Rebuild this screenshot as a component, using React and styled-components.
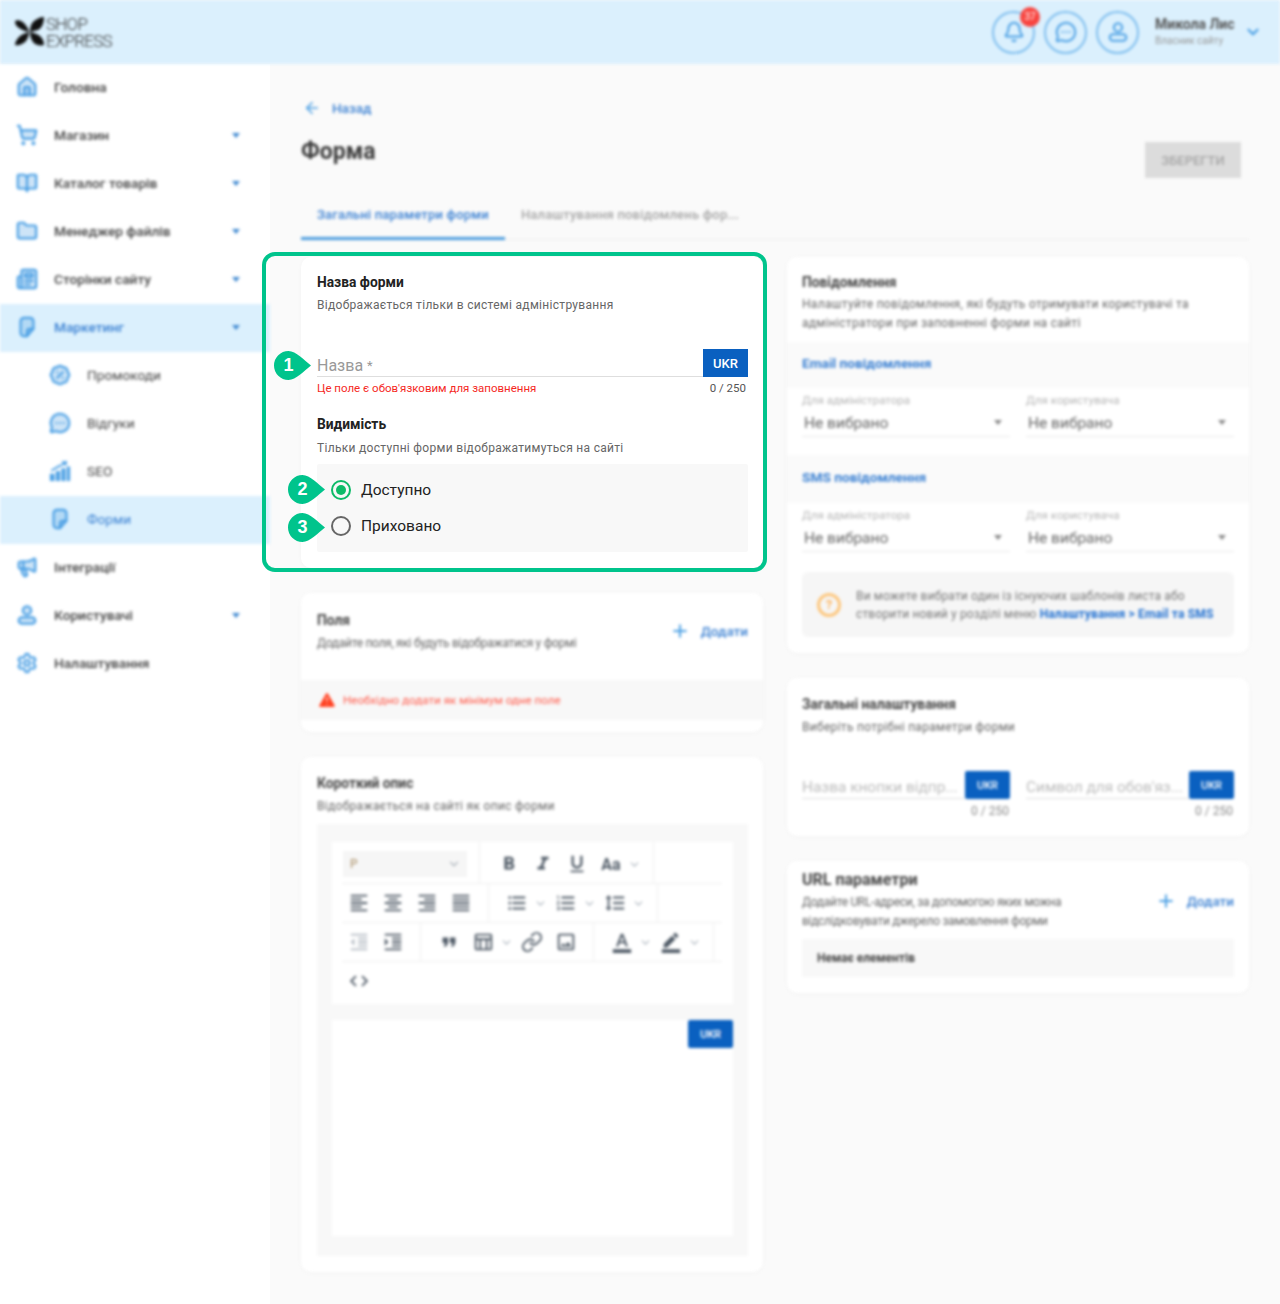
import React from "react";
import styled, { createGlobalStyle } from "styled-components";
import {
  Home,
  ShoppingCart,
  BookOpen,
  Folder,
  Newspaper,
  BadgePercent,
  MessageCircleMore,
  Megaphone,
  Settings,
  Bell,
  ChevronDown,
  ArrowLeft,
  Plus,
  TriangleAlert,
  Link as LinkIcon,
} from "lucide-react";
import {
  MdFormatBold,
  MdFormatItalic,
  MdFormatUnderlined,
  MdFormatAlignLeft,
  MdFormatAlignCenter,
  MdFormatAlignRight,
  MdFormatAlignJustify,
  MdFormatListBulleted,
  MdFormatListNumbered,
  MdFormatLineSpacing,
  MdFormatIndentDecrease,
  MdFormatIndentIncrease,
  MdFormatQuote,
  MdOutlineTableChart,
  MdOutlineImage,
  MdFormatColorText,
  MdBorderColor,
  MdCode,
} from "react-icons/md";

const GlobalStyle = createGlobalStyle`
  * { box-sizing: border-box; }
  html, body { margin: 0; padding: 0; }
  body {
    font-family: Roboto, "Liberation Sans", sans-serif;
    background: #fafafa;
    color: #333;
  }
`;

const blur = "filter: blur(1.6px);";
const ICON_BLUE = "#4a9fe4";
const LINK_BLUE = "#3a80d2";

const Page = styled.div`
  width: 1280px;
  height: 1304px;
  overflow: hidden;
  background: #fafafa;
`;

const Header = styled.header`
  height: 64px;
  background: #dbf0fd;
  display: flex;
  align-items: center;
  padding: 0 18px 0 14px;
  ${blur}
`;

const Logo = styled.div`
  display: flex;
  align-items: center;
  gap: 1px;
`;

const LogoText = styled.div`
  padding-top: 1px;
  font-size: 17px;
  font-weight: 300;
  line-height: 17px;
  letter-spacing: -0.75px;
  color: #333;
`;

const HeaderRight = styled.div`
  margin-left: auto;
  display: flex;
  align-items: center;
`;

const RoundButton = styled.div`
  position: relative;
  width: 43px;
  height: 43px;
  border-radius: 50%;
  border: 2px solid #7dbdee;
  margin-right: 9px;
  display: flex;
  align-items: center;
  justify-content: center;
  color: ${ICON_BLUE};
`;

const Badge = styled.span`
  position: absolute;
  top: -6px;
  right: -7px;
  width: 20px;
  height: 20px;
  border-radius: 50%;
  background: #f8443f;
  color: #fff;
  font-size: 10px;
  display: flex;
  align-items: center;
  justify-content: center;
`;

const UserBox = styled.div`
  margin-left: 7px;
  width: 89px;
`;

const UserName = styled.div`
  font-size: 14px;
  font-weight: 700;
  color: #555;
  line-height: 16px;
`;

const UserRole = styled.div`
  font-size: 10px;
  color: #999;
  line-height: 14px;
  margin-top: 2px;
`;

const Body = styled.div`
  display: grid;
  grid-template-columns: 270px 1010px;
  height: 1240px;
`;

const Sidebar = styled.nav`
  background: #fff;
`;

const SideList = styled.div`
  ${blur}
`;

const SideRow = styled.div`
  height: 48px;
  display: flex;
  align-items: center;
  padding-left: ${(p) => (p.$sub ? "49px" : "16px")};
  padding-right: 30px;
  padding-bottom: 2px;
  background: ${(p) => (p.$active ? "#dbf0fd" : "transparent")};
  color: ${(p) => (p.$active ? LINK_BLUE : "#444")};
  font-size: 13.7px;
  font-weight: ${(p) => (p.$sub ? 400 : 500)};
  svg {
    color: ${ICON_BLUE};
    fill: ${(p) => (p.$noFill ? "none" : "rgba(74, 159, 228, 0.28)")};
    flex: none;
  }
`;

const SideLabel = styled.span`
  margin-left: 16px;
  flex: 1;
`;

const Caret = styled.span`
  width: 0;
  height: 0;
  border-left: 4.5px solid transparent;
  border-right: 4.5px solid transparent;
  border-top: 5px solid ${(p) => p.$color || "#3f88d0"};
`;

const Main = styled.main`
  padding: 36px 31px 0;
`;

const PageHead = styled.div`
  ${blur}
`;

const BackLink = styled.div`
  height: 16px;
  display: flex;
  align-items: center;
  gap: 11px;
  margin-left: 2px;
  font-size: 13.5px;
  font-weight: 500;
  color: ${LINK_BLUE};
  svg {
    color: ${ICON_BLUE};
  }
`;

const TitleRow = styled.div`
  margin-top: 18px;
  height: 44px;
  display: flex;
  justify-content: space-between;
`;

const Title = styled.h1`
  margin: 0;
  font-size: 23px;
  font-weight: 700;
  line-height: 36px;
  color: #3c3c3c;
`;

const SaveButton = styled.div`
  margin: 8px 8px 0 0;
  width: 96px;
  height: 36px;
  background: #dcdcdc;
  color: #a5a5a5;
  font-size: 13px;
  font-weight: 500;
  display: flex;
  align-items: center;
  justify-content: center;
`;

const Tabs = styled.div`
  margin-top: 15px;
  height: 47px;
  display: flex;
  border-bottom: 1px solid #eee;
`;

const Tab = styled.div`
  height: 47px;
  padding: 14px 16px 0;
  font-size: 13px;
  font-weight: 500;
  letter-spacing: 0.2px;
  color: ${(p) => (p.$active ? LINK_BLUE : "#a5a5a5")};
  border-bottom: 3px solid ${(p) => (p.$active ? "#4a9bdd" : "transparent")};
`;

const Columns = styled.div`
  margin-top: 17px;
  display: grid;
  grid-template-columns: 462px 462px;
  column-gap: 24px;
  align-items: start;
`;

const Column = styled.div`
  display: flex;
  flex-direction: column;
  gap: 25px;
`;

const BlurColumn = styled(Column)`
  ${blur}
`;

const Card = styled.section`
  position: relative;
  background: #fff;
  border-radius: 10px;
  box-shadow: 0 1px 4px rgba(0, 0, 0, 0.03);
  height: ${(p) => p.$h}px;
  ${(p) => (p.$blur ? blur : "")}
`;

const CardBody = styled.div`
  padding: ${(p) => p.$top ?? 15}px 15px 0 ${(p) => p.$left ?? 15}px;
`;

const CardTitle = styled.div`
  margin-top: ${(p) => p.$mt ?? 0}px;
  font-size: ${(p) => p.$size || 13.8}px;
  font-weight: 700;
  line-height: 20px;
  color: ${(p) => (p.$dim ? "#444" : "#222")};
`;

const CardDesc = styled.div`
  margin-top: ${(p) => p.$mt ?? 3}px;
  font-size: 12px;
  letter-spacing: ${(p) => p.$ls ?? 0.3}px;
  line-height: ${(p) => p.$lh ?? 20}px;
  color: #666;
  white-space: nowrap;
`;

const FocusFrame = styled.div`
  position: absolute;
  left: -39px;
  right: -4px;
  top: -5px;
  bottom: -4px;
  border: 4px solid #00c48c;
  border-radius: 13px;
  pointer-events: none;
`;

const Callout = styled.div`
  position: absolute;
  left: ${(p) => p.$x}px;
  top: ${(p) => p.$y}px;
  width: 37px;
  height: 29px;
  svg {
    display: block;
  }
`;

const CalloutNum = styled.span`
  position: absolute;
  left: 0;
  top: 0;
  width: 29px;
  height: 29px;
  display: flex;
  align-items: center;
  justify-content: center;
  color: #fff;
  font-family: "Liberation Sans", Arial, sans-serif;
  font-size: 18px;
  font-weight: 700;
`;

const InputRow = styled.div`
  margin-top: ${(p) => p.$mt}px;
  display: flex;
  align-items: flex-end;
`;

const InputBox = styled.div`
  flex: 1;
  min-width: 0;
  height: 28px;
  display: flex;
  align-items: flex-end;
  padding-bottom: ${(p) => (p.$dim ? 1 : 0)}px;
  border-bottom: 1px solid #dedede;
  font-size: ${(p) => (p.$dim ? 15.4 : 16)}px;
  line-height: 20px;
  color: ${(p) => (p.$dim ? "#bbb" : "#999")};
  white-space: nowrap;
`;

const Star = styled.span`
  font-size: 13px;
  line-height: 1;
  margin-left: 4px;
  align-self: flex-start;
  margin-top: 10px;
`;

const UkrButton = styled.div`
  width: ${(p) => p.$w || 45}px;
  height: 28px;
  flex: none;
  background: #0a60c0;
  color: #fff;
  font-size: ${(p) => p.$fs || 13}px;
  font-weight: 500;
  border-radius: ${(p) => (p.$round ? 2 : 0)}px;
  display: flex;
  align-items: center;
  justify-content: center;
`;

const HelperRow = styled.div`
  margin-top: 4px;
  display: flex;
  justify-content: space-between;
  font-size: 11.5px;
  line-height: 14px;
`;

const ErrorText = styled.span`
  color: #f5291f;
`;

const Counter = styled.span`
  color: #555;
  margin-right: 2px;
`;

const RadioPanel = styled.div`
  margin-top: 6px;
  background: #f8f8f8;
  border-radius: 2px;
  padding: 8px 14px;
`;

const RadioRow = styled.label`
  height: 36px;
  display: flex;
  align-items: center;
  gap: 10px;
  font-size: 15.5px;
  color: #222;
`;

const RadioDot = styled.span`
  width: 20px;
  height: 20px;
  border-radius: 50%;
  border: 2px solid ${(p) => (p.$on ? "#0dbb68" : "#666")};
  display: flex;
  align-items: center;
  justify-content: center;
  &::after {
    content: "";
    width: 10px;
    height: 10px;
    border-radius: 50%;
    background: ${(p) => (p.$on ? "#0dbb68" : "transparent")};
  }
`;

const HeadFlex = styled.div`
  display: flex;
  justify-content: space-between;
  align-items: flex-start;
`;

const AddLink = styled.div`
  display: flex;
  align-items: center;
  gap: 11px;
  margin-top: ${(p) => p.$mt}px;
  font-size: 13.5px;
  font-weight: 500;
  color: ${LINK_BLUE};
  svg {
    color: ${ICON_BLUE};
  }
`;

const WarnStrip = styled.div`
  position: absolute;
  left: 0;
  right: 0;
  top: 87px;
  height: 40px;
  background: #f8f8f8;
  display: flex;
  align-items: center;
  gap: 6px;
  padding-left: 16px;
  font-size: 11.6px;
  color: #ff5a4a;
  svg {
    color: #ff4020;
    fill: #ff4020;
  }
`;

const EditorArea = styled.div`
  margin-top: 8px;
  background: #f8f8f8;
  height: 432px;
  padding: 18px 15px;
`;

const Toolbar = styled.div`
  background: #fff;
  height: 162px;
  padding: 0 11px 0 10px;
`;

const ToolRow = styled.div`
  height: ${(p) => p.$h}px;
  display: flex;
  border-bottom: ${(p) => (p.$last ? "none" : "1px solid #eee")};
`;

const ToolGroup = styled.div`
  display: flex;
  align-items: center;
  padding: ${(p) => p.$pt ?? 0}px ${(p) => p.$pr ?? 10}px ${(p) => p.$pb ?? 0}px ${(p) => p.$pl ?? 11}px;
  border-right: ${(p) => (p.$last ? "none" : "1px solid #eee")};
`;

const ToolButton = styled.div`
  width: ${(p) => (p.$chev ? 49 : 34)}px;
  height: 26px;
  display: flex;
  align-items: center;
  padding-left: 6px;
  gap: 6px;
  color: ${(p) => (p.$light ? "#b5bcc4" : "#4f5a66")};
`;

const AaGlyph = styled.span`
  width: 22px;
  text-align: center;
  font-size: 16px;
  font-weight: 700;
`;

const ToolChevron = styled(ChevronDown)`
  color: #aab2ba;
  flex: none;
`;

const FormatSelect = styled.div`
  width: 124px;
  height: 26px;
  background: #f6f6f6;
  margin-left: 1px;
  padding: 0 6px 0 7px;
  display: flex;
  align-items: center;
  justify-content: space-between;
  font-size: 12px;
  color: #a78b60;
`;

const EditorBox = styled.div`
  margin-top: 16px;
  height: 216px;
  background: #fff;
  display: flex;
  justify-content: flex-end;
  align-items: flex-start;
`;

const GreyStrip = styled.div`
  background: #fafafa;
  height: ${(p) => p.$h}px;
  padding: ${(p) => p.$pt}px 15px 0;
`;

const StripTitle = styled.div`
  font-size: 13.7px;
  font-weight: 700;
  line-height: 24px;
  color: ${LINK_BLUE};
`;

const FieldRow = styled.div`
  display: grid;
  grid-template-columns: 208px 208px;
  column-gap: 16px;
  padding: ${(p) => (p.$flat ? "0 15px" : "4px 15px 0")};
`;

const FieldLabel = styled.div`
  font-size: 11.6px;
  line-height: 16px;
  color: #b5b5b5;
`;

const SelectBox = styled.div`
  height: 29px;
  display: flex;
  align-items: center;
  justify-content: space-between;
  padding: 1px 8px 0 2px;
  border-bottom: 1px solid #e8e8e8;
  font-size: 15.5px;
  color: #666;
`;

const Spacer = styled.div`
  height: ${(p) => p.$h}px;
`;

const InfoBox = styled.div`
  margin: 20px 15px 0;
  height: 65px;
  background: #f6f6f6;
  border-radius: 6px;
  display: flex;
  align-items: center;
  gap: 15px;
  padding-left: 15px;
  font-size: 12px;
  letter-spacing: 0.16px;
  line-height: 18px;
  color: #777;
`;

const InfoIcon = styled.span`
  width: 24px;
  height: 24px;
  flex: none;
  border-radius: 50%;
  border: 3px solid #fdc67c;
  color: #fdb45c;
  font-size: 13px;
  font-weight: 700;
  display: flex;
  align-items: center;
  justify-content: center;
`;

const InfoLink = styled.span`
  color: #1f6fd0;
  font-weight: 700;
`;

const CounterLine = styled.div`
  margin-top: 4px;
  text-align: right;
  padding-right: 1px;
  font-size: 12px;
  line-height: 16px;
  color: #888;
`;

const EmptyStrip = styled.div`
  margin: 8px 15px 0;
  height: 38px;
  background: #f8f8f8;
  display: flex;
  align-items: center;
  padding-left: 15px;
  font-size: 12px;
  font-weight: 700;
  color: #444;
`;

// narrow note with a curled corner, used for Маркетинг and Форми
function NoteIcon({ size = 22, strokeWidth = 2.4 }) {
  return (
    <svg width={size} height={size} viewBox="0 0 24 24" stroke="currentColor" strokeWidth={strokeWidth} strokeLinejoin="round" strokeLinecap="round">
      <path d="M9 2h6c2.5 0 4 1.5 4 4v8l-7 8H9c-2.5 0-4-1.5-4-4V6c0-2.5 1.500-4 4-4z" />
      <path d="M12 22v-5c0-2 1-3 3-3h4" />
    </svg>
  );
}

function UserIcon({ size = 22, strokeWidth = 2.4 }) {
  return (
    <svg width={size} height={size} viewBox="0 0 24 24" fill="none" stroke="currentColor" strokeWidth={strokeWidth}>
      <circle cx="12" cy="7" r="4.5" />
      <rect x="3" y="14.500" width="18" height="7" rx="3.500" />
    </svg>
  );
}

function SeoIcon({ size = 22 }) {
  return (
    <svg width={size} height={size} viewBox="0 0 24 24" style={{ fill: "currentColor" }} stroke="none">
      <path d="M1 23v-8h5v8zM7.500 23V12h4.500v11zM13.500 23V9H18v14zM19.500 23V7H23v16z" />
      <path d="M2 11l8-5 5-2-1.500-2.500L20 1l-1.500 6-1.500-2-6 3-8 4.500z" />
    </svg>
  );
}

const menu = [
  { label: "Головна", Icon: Home },
  { label: "Магазин", Icon: ShoppingCart, caret: true },
  { label: "Каталог товарів", Icon: BookOpen, caret: true },
  { label: "Менеджер файлів", Icon: Folder, caret: true },
  { label: "Сторінки сайту", Icon: Newspaper, caret: true },
  { label: "Маркетинг", Icon: NoteIcon, caret: true, active: true },
  { label: "Промокоди", Icon: BadgePercent, sub: true },
  { label: "Відгуки", Icon: MessageCircleMore, sub: true },
  { label: "SEO", Icon: SeoIcon, sub: true },
  { label: "Форми", Icon: NoteIcon, sub: true, active: true },
  { label: "Інтеграції", Icon: Megaphone },
  { label: "Користувачі", Icon: UserIcon, caret: true },
  { label: "Налаштування", Icon: Settings, noFill: true },
];

function LogoMark() {
  return (
    <svg width="31" height="32" viewBox="0 0 31 32">
      <path
        d="M1 5c4-2 9 1 12 6 1 2 2 3 2 5-4-1-7-2-10-4C2 10 1 8 1 5zM30 1c0 6-2 11-6 13-3 1-5 1-8 2 0-5 1-8 3-10 3-3 7-5 11-5zM15 16c-3 1-7 2-10 5-2 2-4 5-4 8 4 1 8-1 11-4 2-3 3-6 3-9zM16 16c4 1 8 2 11 5 2 2 3 5 3 8-4 1-9 0-11-3-2-3-3-6-3-10z"
        fill="#111"
      />
    </svg>
  );
}

function CalloutMark({ x, y, n }) {
  return (
    <Callout $x={x} $y={y}>
      <svg width="37" height="29" viewBox="0 0 37 29">
        <path
          d="M14.5 0C22 0 30 9 37 14.5 30 20 22 29 14.5 29A14.5 14.5 0 0 1 14.5 0Z"
          fill="#00c48c"
        />
      </svg>
      <CalloutNum>{n}</CalloutNum>
    </Callout>
  );
}

function Tool({ Icon, chev, light, text }) {
  return (
    <ToolButton $chev={chev} $light={light}>
      {text ? <AaGlyph>{text}</AaGlyph> : <Icon size={22} />}
      {chev && <ToolChevron size={13} strokeWidth={2} />}
    </ToolButton>
  );
}

function SelectField({ label }) {
  return (
    <div>
      <FieldLabel>{label}</FieldLabel>
      <SelectBox>
        Не вибрано
        <Caret $color="#888" />
      </SelectBox>
    </div>
  );
}

export default function App() {
  return (
    <Page>
      <GlobalStyle />
      <Header>
        <Logo>
          <LogoMark />
          <LogoText>
            SHOP
            <br />
            EXPRESS
          </LogoText>
        </Logo>
        <HeaderRight>
          <RoundButton>
            <Bell size={22} strokeWidth={2.2} />
            <Badge>37</Badge>
          </RoundButton>
          <RoundButton>
            <MessageCircleMore size={22} strokeWidth={2.2} />
          </RoundButton>
          <RoundButton>
            <UserIcon strokeWidth={2.2} />
          </RoundButton>
          <UserBox>
            <UserName>Микола Лис</UserName>
            <UserRole>Власник сайту</UserRole>
          </UserBox>
          <ChevronDown size={18} strokeWidth={3} color={ICON_BLUE} />
        </HeaderRight>
      </Header>

      <Body>
        <Sidebar>
          <SideList>
            {menu.map(({ label, Icon, caret, active, sub, noFill }) => (
              <SideRow key={label} $active={active} $sub={sub} $noFill={noFill}>
                <Icon size={22} strokeWidth={2.4} />
                <SideLabel>{label}</SideLabel>
                {caret && <Caret />}
              </SideRow>
            ))}
          </SideList>
        </Sidebar>

        <Main>
          <PageHead>
            <BackLink>
              <ArrowLeft size={18} strokeWidth={2.2} />
              Назад
            </BackLink>
            <TitleRow>
              <Title>Форма</Title>
              <SaveButton>ЗБЕРЕГТИ</SaveButton>
            </TitleRow>
            <Tabs>
              <Tab $active>Загальні параметри форми</Tab>
              <Tab>Налаштування повідомлень фор...</Tab>
            </Tabs>
          </PageHead>

          <Columns>
            <Column>
              <Card $h={311}>
                <CardBody $left={16}>
                  <CardTitle>Назва форми</CardTitle>
                  <CardDesc>Відображається тільки в системі адміністрування</CardDesc>
                  <InputRow $mt={34}>
                    <InputBox>
                      Назва<Star>*</Star>
                    </InputBox>
                    <UkrButton>UKR</UkrButton>
                  </InputRow>
                  <HelperRow>
                    <ErrorText>Це поле є обов'язковим для заповнення</ErrorText>
                    <Counter>0 / 250</Counter>
                  </HelperRow>
                  <CardTitle $mt={19}>Видимість</CardTitle>
                  <CardDesc $mt={4}>Тільки доступні форми відображатимуться на сайті</CardDesc>
                  <RadioPanel>
                    <RadioRow>
                      <RadioDot $on />
                      Доступно
                    </RadioRow>
                    <RadioRow>
                      <RadioDot />
                      Приховано
                    </RadioRow>
                  </RadioPanel>
                </CardBody>
                <FocusFrame />
                <CalloutMark x={-27} y={94} n="1" />
                <CalloutMark x={-13} y={218} n="2" />
                <CalloutMark x={-13} y={256} n="3" />
              </Card>

              <Card $h={139} $blur>
                <CardBody $top={17} $left={16}>
                  <HeadFlex>
                    <div>
                      <CardTitle $dim>Поля</CardTitle>
                      <CardDesc $ls={-0.3}>Додайте поля, які будуть відображатися у формі</CardDesc>
                    </div>
                    <AddLink $mt={11}>
                      <Plus size={20} strokeWidth={2.4} />
                      Додати
                    </AddLink>
                  </HeadFlex>
                </CardBody>
                <WarnStrip>
                  <TriangleAlert size={20} stroke="#fff" strokeWidth={1.4} />
                  Необхідно додати як мінімум одне поле
                </WarnStrip>
              </Card>

              <Card $h={515} $blur>
                <CardBody $top={16} $left={16}>
                  <CardTitle $dim>Короткий опис</CardTitle>
                  <CardDesc>Відображається на сайті як опис форми</CardDesc>
                  <EditorArea>
                    <Toolbar>
                      <ToolRow $h={42}>
                        <ToolGroup $pl={0} $pr={12} $pt={3}>
                          <FormatSelect>
                            P
                            <ToolChevron size={14} strokeWidth={2} />
                          </FormatSelect>
                        </ToolGroup>
                        <ToolGroup $pl={12} $pt={3}>
                          <Tool Icon={MdFormatBold} />
                          <Tool Icon={MdFormatItalic} />
                          <Tool Icon={MdFormatUnderlined} />
                          <Tool text="Aa" chev />
                        </ToolGroup>
                      </ToolRow>
                      <ToolRow $h={39}>
                        <ToolGroup $pl={0}>
                          <Tool Icon={MdFormatAlignLeft} />
                          <Tool Icon={MdFormatAlignCenter} />
                          <Tool Icon={MdFormatAlignRight} />
                          <Tool Icon={MdFormatAlignJustify} />
                        </ToolGroup>
                        <ToolGroup>
                          <Tool Icon={MdFormatListBulleted} chev />
                          <Tool Icon={MdFormatListNumbered} chev />
                          <Tool Icon={MdFormatLineSpacing} chev />
                        </ToolGroup>
                      </ToolRow>
                      <ToolRow $h={39}>
                        <ToolGroup $pl={0}>
                          <Tool Icon={MdFormatIndentDecrease} light />
                          <Tool Icon={MdFormatIndentIncrease} />
                        </ToolGroup>
                        <ToolGroup>
                          <Tool Icon={MdFormatQuote} />
                          <Tool Icon={MdOutlineTableChart} chev />
                          <Tool Icon={LinkIcon} />
                          <Tool Icon={MdOutlineImage} />
                        </ToolGroup>
                        <ToolGroup>
                          <Tool Icon={MdFormatColorText} chev />
                          <Tool Icon={MdBorderColor} chev />
                        </ToolGroup>
                      </ToolRow>
                      <ToolRow $h={42} $last>
                        <ToolGroup $pl={0} $pb={4} $last>
                          <Tool Icon={MdCode} />
                        </ToolGroup>
                      </ToolRow>
                    </Toolbar>
                    <EditorBox>
                      <UkrButton $round $fs={11}>
                        UKR
                      </UkrButton>
                    </EditorBox>
                  </EditorArea>
                </CardBody>
              </Card>
            </Column>

            <BlurColumn>
              <Card $h={396}>
                <CardBody>
                  <CardTitle $dim>Повідомлення</CardTitle>
                  <CardDesc $lh={19}>
                    Налаштуйте повідомлення, які будуть отримувати користувачі та
                    <br />
                    адміністратори при заповненні форми на сайті
                  </CardDesc>
                </CardBody>
                <Spacer $h={9} />
                <GreyStrip $h={46} $pt={9}>
                  <StripTitle>Email повідомлення</StripTitle>
                </GreyStrip>
                <FieldRow>
                  <SelectField label="Для адміністратора" />
                  <SelectField label="Для користувача" />
                </FieldRow>
                <Spacer $h={18} />
                <GreyStrip $h={48} $pt={10}>
                  <StripTitle>SMS повідомлення</StripTitle>
                </GreyStrip>
                <FieldRow>
                  <SelectField label="Для адміністратора" />
                  <SelectField label="Для користувача" />
                </FieldRow>
                <InfoBox>
                  <InfoIcon>?</InfoIcon>
                  <div>
                    Ви можете вибрати один із існуючих шаблонів листа або
                    <br />
                    створити новий у розділі меню <InfoLink>Налаштування &gt; Email та SMS</InfoLink>
                  </div>
                </InfoBox>
              </Card>

              <Card $h={158}>
                <CardBody $top={16}>
                  <CardTitle $dim>Загальні налаштування</CardTitle>
                  <CardDesc>Виберіть потрібні параметри форми</CardDesc>
                </CardBody>
                <FieldRow $flat>
                  <div>
                    <InputRow $mt={34}>
                      <InputBox $dim>Назва кнопки відпр...</InputBox>
                      <UkrButton $round $fs={11}>
                        UKR
                      </UkrButton>
                    </InputRow>
                    <CounterLine>0 / 250</CounterLine>
                  </div>
                  <div>
                    <InputRow $mt={34}>
                      <InputBox $dim>Символ для обов'яз...</InputBox>
                      <UkrButton $round $fs={11}>
                        UKR
                      </UkrButton>
                    </InputRow>
                    <CounterLine>0 / 250</CounterLine>
                  </div>
                </FieldRow>
              </Card>

              <Card $h={132}>
                <CardBody $top={9}>
                  <HeadFlex>
                    <div>
                      <CardTitle $size={16} $dim>
                        URL параметри
                      </CardTitle>
                      <CardDesc $ls={-0.3} $lh={19}>
                        Додайте URL-адреси, за допомогою яких можна
                        <br />
                        відслідковувати джерело замовлення форми
                      </CardDesc>
                    </div>
                    <AddLink $mt={21}>
                      <Plus size={20} strokeWidth={2.4} />
                      Додати
                    </AddLink>
                  </HeadFlex>
                </CardBody>
                <EmptyStrip>Немає елементів</EmptyStrip>
              </Card>
            </BlurColumn>
          </Columns>
        </Main>
      </Body>
    </Page>
  );
}
